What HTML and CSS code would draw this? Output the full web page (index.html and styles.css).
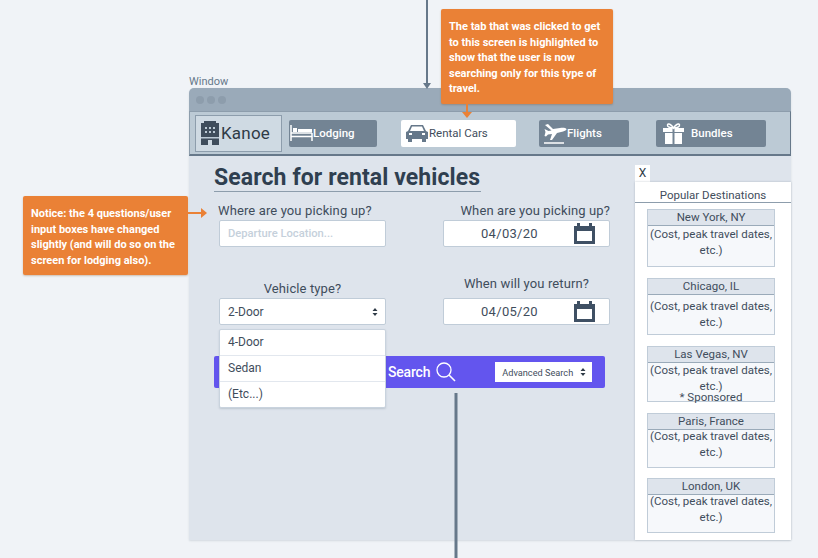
FILE: index.html
```html
<!DOCTYPE html>
<html>

<head>
  <meta charset="utf-8">
  <title>Kanoe - rental cars wireframe</title>
  <link rel="stylesheet" href="styles.css">
</head>

<body>

  <div class="canvas">
    <div class="window-label">Window</div>

    <div class="window">
      <div class="titlebar">
        <span class="dot"></span><span class="dot"></span><span class="dot"></span>
      </div>

      <nav class="nav">
        <div class="logo">
          <svg class="logo-icon" viewBox="0 0 18 24">
            <path fill="#3f4d5c" d="M3 0h12v2h3v22h-7v-5H7v5H0V2h3z" />
            <path fill="#bccad5" d="M0 16h18v1.500H0zM4 6h2v2H4zM8 6h2v2H8zM12 6h2v2h-2zM4 10h2v2H4zM8 10h2v2H8zM12 10h2v2h-2z" />
          </svg>
          <span>Kanoe</span>
        </div>
        <a class="tab tab-lodging">
          <svg class="tab-icon" width="23" height="18" viewBox="0 0 23 18">
            <path fill="none" stroke="#fff" stroke-width="1.500" d="M1 1v16M1 12.500h21M22 9v8M1 9h21" />
            <path fill="#fff" d="M3 4h4v4H3zM8 5h14v3H8z" />
          </svg>
          Lodging
        </a>
        <a class="tab tab-cars active">
          <svg class="tab-icon" width="22" height="18" viewBox="0 0 22 18">
            <path fill="#66788a" d="M5 1h12l3 6 2 1v7H0V8l2-1zM6 2.500 4 7h14l-2-4.500zM2 15h4v3H2zM16 15h4v3h-4z" />
            <path fill="#fff" d="M3 9h3v2H3zM16 9h3v2h-3z" />
          </svg>
          Rental Cars
        </a>
        <a class="tab tab-flights">
          <svg class="tab-icon" width="23" height="21" viewBox="0 0 23 21">
            <path fill="#fff" d="M1 2l3-1 5 5 7-1c3-.5 6 0 6.500 1S20 8.500 17 9l-4 1-5 7H6l2-6-4 .5-2 2-1.500-.5 1-4-1-3 4 2 3-.5z" />
            <path stroke="#fff" stroke-width="1.500" d="M0 20h20" />
          </svg>
          Flights
        </a>
        <a class="tab tab-bundles">
          <svg class="tab-icon" width="21" height="21" viewBox="0 0 21 21">
            <path fill="#fff" d="M0 5h9.500v4H0zM11.500 5H21v4h-9.500zM2 10h7.500v11H2zM11.500 10H19v11h-7.500z" />
            <path fill="none" stroke="#fff" stroke-width="1.500" d="M10.500 5C8 1 5 0 4.500 2s3 3 6 3c3 0 6.500-1 6-3s-3.500-1-6 3z" />
          </svg>
          Bundles
        </a>
      </nav>

      <div class="content">
        <main class="search">
          <h1 class="heading">Search for rental vehicles</h1>

          <div class="fields">
            <div class="field">
              <label class="label label-left">Where are you picking up?</label>
              <div class="box placeholder">Departure Location...</div>
            </div>
            <div class="field">
              <label class="label label-right">When are you picking up?</label>
              <div class="box date">
                <span class="date-text">04/03/20</span>
                <svg class="calendar" width="21" height="21" viewBox="0 0 21 21">
                  <path fill="#3f5064" d="M3 0h3v3h9V0h3v3h3v18H0V3h3zM3 8v10h15V8z" />
                </svg>
              </div>
            </div>
            <div class="field field-low">
              <label class="label label-center">Vehicle type?</label>
              <div class="box select">
                <span>2-Door</span>
                <svg class="updown" width="6" height="8" viewBox="0 0 6 8">
                  <path fill="#2f3b47" d="M3 0l2.500 3h-5zM3 8 .5 5h5z" />
                </svg>
              </div>
              <ul class="dropdown">
                <li>4-Door</li>
                <li>Sedan</li>
                <li>(Etc...)</li>
              </ul>
            </div>
            <div class="field field-return">
              <label class="label label-center">When will you return?</label>
              <div class="box date">
                <span class="date-text">04/05/20</span>
                <svg class="calendar" width="21" height="21" viewBox="0 0 21 21">
                  <path fill="#3f5064" d="M3 0h3v3h9V0h3v3h3v18H0V3h3zM3 8v10h15V8z" />
                </svg>
              </div>
            </div>
          </div>

          <div class="searchbar">
            <span class="search-text">Search</span>
            <svg class="search-icon" width="20" height="20" viewBox="0 0 20 20">
              <circle cx="8" cy="8" r="7" fill="none" stroke="#fff" stroke-width="1.300" />
              <path stroke="#fff" stroke-width="1.600" d="M13 13l6 6" />
            </svg>
            <div class="advanced">
              <span>Advanced Search</span>
              <svg width="6" height="8" viewBox="0 0 6 8">
                <path fill="#2f3b47" d="M3 0l2.500 3h-5zM3 8 .5 5h5z" />
              </svg>
            </div>
          </div>
        </main>

        <aside class="side">
          <div class="close">X</div>
          <div class="side-panel">
            <h2 class="side-title">Popular Destinations</h2>

            <div class="dest dest-tall">
              <h3>New York, NY</h3>
              <p>(Cost, peak travel dates, etc.)</p>
            </div>
            <div class="dest dest-mid">
              <h3>Chicago, IL</h3>
              <p>(Cost, peak travel dates, etc.)</p>
            </div>
            <div class="dest dest-vegas">
              <h3>Las Vegas, NV</h3>
              <p>(Cost, peak travel dates, etc.)</p>
              <p class="sponsored">* Sponsored</p>
            </div>
            <div class="dest dest-short">
              <h3>Paris, France</h3>
              <p>(Cost, peak travel dates, etc.)</p>
            </div>
            <div class="dest dest-short">
              <h3>London, UK</h3>
              <p>(Cost, peak travel dates, etc.)</p>
            </div>
          </div>
        </aside>
      </div>
    </div>

    <!-- annotations -->
    <div class="note note-tab">The tab that was clicked to get to this screen is highlighted to show that the user is now searching only for this type of travel.</div>
    <div class="note note-fields">Notice: the 4 questions/user input boxes have changed slightly (and will do so on the screen for lodging also).</div>

    <svg class="connector line-top" width="10" height="89" viewBox="0 0 10 89">
      <path stroke="#66788a" stroke-width="2" d="M5 0v84" />
      <path fill="#66788a" d="M1 83h8l-4 6z" />
    </svg>
    <svg class="connector line-bottom" width="4" height="165" viewBox="0 0 4 165">
      <path stroke="#66788a" stroke-width="3" d="M2 0v165" />
    </svg>
    <svg class="connector arrow-tab" width="10" height="15" viewBox="0 0 10 15">
      <path stroke="#ea8136" stroke-width="2" d="M5 0v10" />
      <path fill="#ea8136" d="M0 8h10l-5 6z" />
    </svg>
    <svg class="connector arrow-fields" width="20" height="10" viewBox="0 0 20 10">
      <path stroke="#ea8136" stroke-width="2" d="M0 5h15" />
      <path fill="#ea8136" d="M13 0l6 5-6 5z" />
    </svg>
  </div>

</body>

</html>
```

FILE: styles.css
```css
* {
  box-sizing: border-box;
}

html,
body {
  margin: 0;
  height: 100%;
  overflow: hidden;
}

body {
  background-color: #f0f3f7;
  font-family: "Roboto", "Liberation Sans", sans-serif;
  color: #3f4d5c;
}

.canvas {
  position: relative;
  width: 818px;
  height: 558px;
  padding: 75px 0 0 189px;
}

.window-label {
  height: 13px;
  font-size: 11px;
  line-height: 13px;
  color: #66788a;
}

/*********** Window chrome ***********/

.window {
  width: 602px;
  height: 452px;
  display: flex;
  flex-direction: column;
  background-color: #dee4ec;
  border-radius: 5px 5px 0 0;
  box-shadow: 0 1px 2px rgba(60, 80, 100, 0.15);
}

.titlebar {
  flex: none;
  height: 23px;
  display: flex;
  align-items: center;
  gap: 3px;
  padding: 0 0 0 7px;
  background-color: #9aaab9;
  border-radius: 5px 5px 0 0;
}

.dot {
  width: 8px;
  height: 8px;
  border-radius: 50%;
  background-color: #8d9dac;
}

.nav {
  flex: none;
  height: 45px;
  display: flex;
  align-items: center;
  padding: 0 24px 0 5px;
  background-color: #bccad5;
  border: 1px solid #66788a;
  border-top: 1px solid #8d9dac;
  border-left-color: #8d9dac;
  border-bottom-width: 2px;
}

.logo {
  width: 87px;
  height: 37px;
  display: flex;
  align-items: center;
  gap: 2px;
  padding-left: 5px;
  background-color: #cfdae3;
  border: 1px solid #8d9dac;
  font-size: 17px;
  letter-spacing: 0.2px;
  color: #2f3b47;
}

.logo-icon {
  width: 18px;
  height: 24px;
}

.tab {
  height: 27px;
  display: flex;
  align-items: center;
  background-color: #738494;
  border-radius: 2px;
  font-size: 11.500px;
  font-weight: 500;
  color: #fff;
}

.tab-icon {
  flex: none;
}

.tab-lodging {
  width: 88px;
  margin-left: 7px;
  padding-left: 1px;
}

.tab-cars {
  width: 115px;
  margin-left: 24px;
  padding-left: 5px;
  gap: 1px;
}

.tab-flights {
  width: 90px;
  margin-left: 23px;
  padding-left: 5px;
}

.tab-bundles {
  width: 110px;
  margin-left: 27px;
  padding-left: 7px;
  gap: 7px;
}

.tab.active {
  background-color: #fff;
  font-weight: 400;
  color: #3f4d5c;
}

/*********** Search form ***********/

.content {
  flex: 1;
  display: flex;
  min-height: 0;
}

.search {
  position: relative;
  width: 446px;
  padding: 8px 0 0 25px;
}

.heading {
  width: 267px;
  height: 28px;
  margin: 0;
  font-size: 23px;
  line-height: 27px;
  font-weight: 700;
  white-space: nowrap;
  letter-spacing: 0.1px;
  color: #2f3f50;
  border-bottom: 1px solid #8d9dac;
}

.fields {
  display: grid;
  grid-template-columns: 167px 167px;
  column-gap: 57px;
  margin: 10px 0 0 5px;
}

.field {
  position: relative;
  height: 78px;
}

.field-low {
  height: auto;
}

.field-return {
  height: auto;
}

.label {
  display: block;
  height: 18px;
  font-size: 13px;
  line-height: 18px;
  white-space: nowrap;
  letter-spacing: 0.12px;
}

.label-left {
  margin-left: -1px;
}

.label-right {
  text-align: right;
}

.label-center {
  text-align: center;
}

.field-return .label {
  margin-top: -5px;
  margin-bottom: 5px;
}

.box {
  height: 27px;
  display: flex;
  align-items: center;
  padding: 0 8px;
  background-color: #fff;
  border: 1px solid #c0ccd8;
  border-radius: 2px;
  font-size: 12px;
}

.placeholder {
  color: #c5d0db;
  font-size: 11.200px;
  font-weight: 500;
}

.date {
  justify-content: space-between;
  padding: 0 14px 0 37px;
  font-size: 13px;
  letter-spacing: 0.3px;
}

.select {
  justify-content: space-between;
  padding-right: 7px;
}

.dropdown {
  position: absolute;
  top: 49px;
  left: 0;
  z-index: 2;
  width: 167px;
  margin: 0;
  padding: 0;
  list-style: none;
  background-color: #fff;
  border: 1px solid #c9d3de;
  border-radius: 2px;
  box-shadow: 0 1px 2px rgba(60, 80, 100, 0.2);
}

.dropdown li {
  height: 26px;
  padding-left: 8px;
  font-size: 12px;
  line-height: 24px;
  border-bottom: 1px solid #e2e7ee;
}

.dropdown li:last-child {
  height: 25px;
  border-bottom: none;
}

.searchbar {
  position: absolute;
  top: 200px;
  left: 25px;
  width: 391px;
  height: 32px;
  display: flex;
  align-items: center;
  padding-left: 174px;
  background-color: #6355ee;
  border-radius: 2px;
}

.search-text {
  font-size: 14px;
  font-weight: 500;
  letter-spacing: -0.2px;
  color: #fff;
}

.search-icon {
  margin-left: 6px;
}

.advanced {
  width: 97px;
  height: 20px;
  display: flex;
  align-items: center;
  justify-content: space-between;
  margin-left: 39px;
  padding: 0 6px 0 7px;
  background-color: #fff;
  font-size: 9.200px;
  white-space: nowrap;
}

/*********** Side panel ***********/

.side {
  width: 156px;
  padding-top: 9px;
}

.close {
  width: 15px;
  height: 17px;
  background-color: #fff;
  font-size: 12px;
  line-height: 17px;
  text-align: center;
  color: #2f3b47;
}

.side-panel {
  height: 358px;
  padding: 0 15px 0 12px;
  background-color: #fff;
  box-shadow: 0 0 2px rgba(60, 80, 100, 0.3);
}

.side-title {
  height: 21px;
  margin: 0 -15px 6px -12px;
  font-size: 11.500px;
  line-height: 26px;
  font-weight: 400;
  text-align: center;
  white-space: nowrap;
  border-bottom: 1px solid #8d9dac;
}

.dest {
  width: 128px;
  background-color: #f6f8fb;
  border: 1px solid #c0ccd8;
  text-align: center;
  font-size: 11.500px;
  line-height: 16px;
}

.dest h3 {
  height: 16px;
  margin: 0;
  font-size: 11.500px;
  font-weight: 400;
  line-height: 15px;
  background-color: #dee4ec;
  border-bottom: 1px solid #9aaab9;
}

.dest p {
  margin: 0;
}

.dest-tall {
  height: 58px;
  margin-bottom: 11px;
}

.dest-mid {
  height: 57px;
  margin-bottom: 11px;
}

.dest-mid p {
  padding-top: 3px;
}

.dest-vegas {
  height: 56px;
  margin-bottom: 11px;
}

.dest-vegas p {
  margin-top: -1px;
}

.dest-short {
  height: 55px;
  margin-bottom: 10px;
}

.dest-short p {
  margin-top: -2px;
}

.dest-short h3 {
  line-height: 14px;
}

.dest-vegas p.sponsored {
  margin-top: -3px;
  line-height: 12px;
}

/*********** Annotations ***********/

.note {
  position: absolute;
  z-index: 3;
  background-color: #ea8136;
  border-radius: 2px;
  box-shadow: 0 1px 2px rgba(120, 70, 20, 0.3);
  font-size: 11px;
  line-height: 15.600px;
  font-weight: 700;
  color: #fff;
}

.note-tab {
  top: 9px;
  left: 441px;
  width: 172px;
  height: 95px;
  padding: 10px 8px 0 8px;
}

.note-fields {
  top: 196px;
  left: 23px;
  width: 165px;
  height: 79px;
  padding: 10px 6px 0 8px;
}

.connector {
  position: absolute;
  z-index: 3;
  display: block;
}

.line-top {
  top: 0;
  left: 422px;
}

.line-bottom {
  top: 393px;
  left: 454px;
}

.arrow-tab {
  top: 104px;
  left: 462px;
}

.arrow-fields {
  top: 208px;
  left: 188px;
}
```
